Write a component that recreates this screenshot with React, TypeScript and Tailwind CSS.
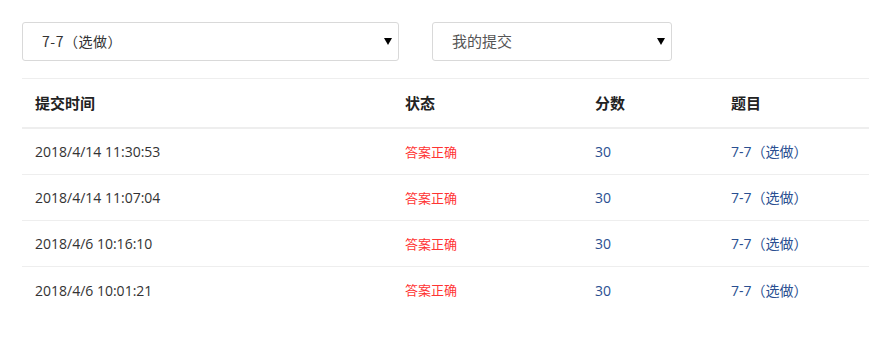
const rows = [
  { time: "2018/4/14 11:30:53", status: "答案正确", score: 30, problem: "7-7（选做）" },
  { time: "2018/4/14 11:07:04", status: "答案正确", score: 30, problem: "7-7（选做）" },
  { time: "2018/4/6 10:16:10", status: "答案正确", score: 30, problem: "7-7（选做）" },
  { time: "2018/4/6 10:01:21", status: "答案正确", score: 30, problem: "7-7（选做）" },
];

const Select = ({ label, width, textClass }: { label: string; width: string; textClass: string }) => (
  <div
    className={`${width} h-[39px] flex items-center justify-between border border-[#d9d9d9] rounded-[3px] bg-white pl-[19px] pr-[6px]`}
  >
    <span className={textClass}>{label}</span>
    {/* little dropdown triangle */}
    <span className="w-0 h-0 border-l-[4px] border-r-[4px] border-t-[7px] border-l-transparent border-r-transparent border-t-black" />
  </div>
);

export default function App() {
  return (
    <div className="min-h-screen bg-white pl-[22px] pt-[22px] font-['Open_Sans','Noto_Sans_CJK_SC',sans-serif] text-[#333]">
      {/* Filters */}
      <div className="flex gap-[33px]">
        <Select
          label="7-7（选做）"
          width="w-[377px]"
          textClass="text-[14px] text-[#333] tracking-[0.5px] font-['Noto_Sans_CJK_SC',sans-serif]"
        />
        <Select
          label="我的提交"
          width="w-[240px]"
          textClass="text-[15px] text-[#555] font-['Noto_Sans_CJK_SC',sans-serif]"
        />
      </div>

      {/* Submissions table */}
      <div className="mt-[17px] border-t border-[#eee]">
        <div className="grid grid-cols-[370px_190px_136px_1fr] h-[50px] items-center border-b-2 border-[#eee] text-[15px] font-bold text-[#222] font-['Noto_Sans_CJK_SC',sans-serif]">
          <div className="pl-[13px]">提交时间</div>
          <div className="pl-[13px]">状态</div>
          <div className="pl-[13px]">分数</div>
          <div className="pl-[13px]">题目</div>
        </div>
        {rows.map((r, i) => (
          <div
            key={i}
            className={`grid grid-cols-[370px_190px_136px_1fr] h-[46px] items-center text-[14px] ${
              i < rows.length - 1 ? "border-b border-[#eee]" : ""
            }`}
          >
            <div className="pl-[13px] text-[#333]">{r.time}</div>
            <div className="pl-[13px] text-[13px] text-[#f33] font-['Noto_Sans_CJK_SC',sans-serif]">{r.status}</div>
            <div className="pl-[13px] text-[#2a4f91]">{r.score}</div>
            <div className="pl-[13px] text-[#2a4f91]">{r.problem}</div>
          </div>
        ))}
      </div>
    </div>
  );
}
